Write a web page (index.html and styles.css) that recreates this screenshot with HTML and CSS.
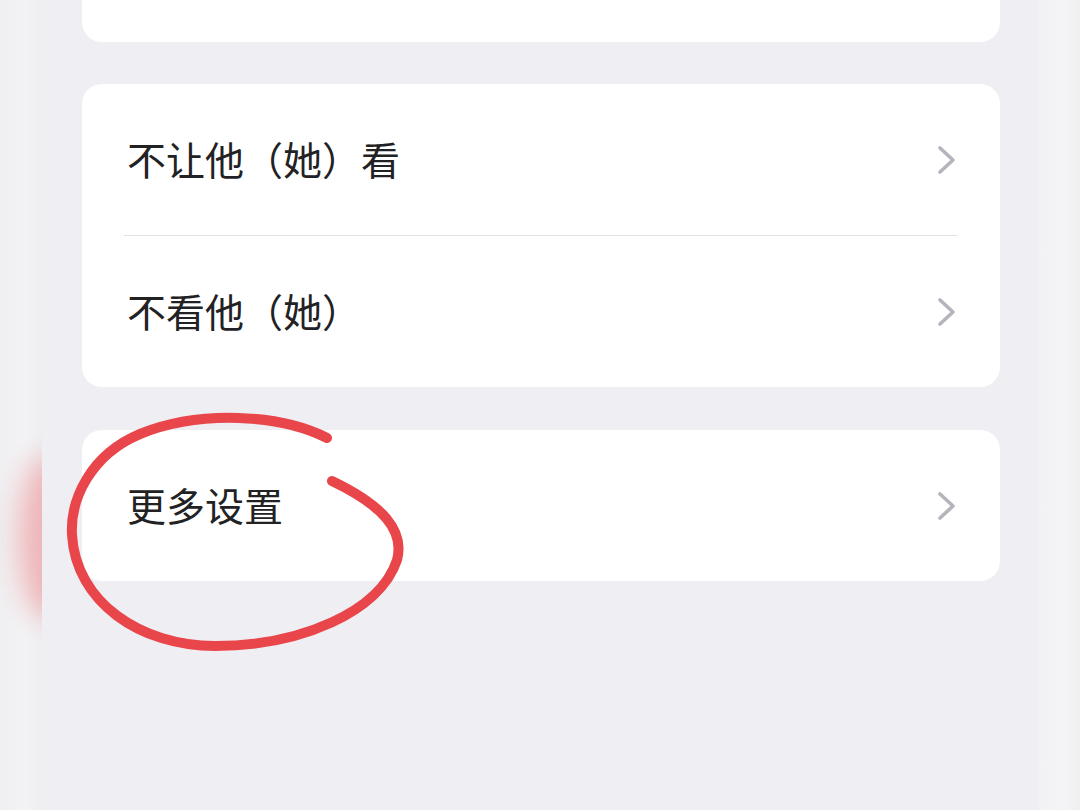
FILE: index.html
```html
<!DOCTYPE html>
<html lang="zh-CN">
<head>
    <meta charset="UTF-8">
    <title>朋友权限</title>
    <link rel="stylesheet" href="styles.css">
</head>
<body>
    <div id="wrap">
        <div class="side side-left"><span class="blob"></span></div>
        <div id="app">
            <div class="card card-top"></div>
            <div class="card">
                <div class="row">
                    <span class="label">不让他（她）看</span>
                    <svg class="arrow" viewBox="0 0 20 30"><polyline points="3,3 16,15 3,27"/></svg>
                </div>
                <div class="line"></div>
                <div class="row">
                    <span class="label">不看他（她）</span>
                    <svg class="arrow" viewBox="0 0 20 30"><polyline points="3,3 16,15 3,27"/></svg>
                </div>
            </div>
            <div class="card card-more">
                <div class="row">
                    <span class="label">更多设置</span>
                    <svg class="arrow" viewBox="0 0 20 30"><polyline points="3,3 16,15 3,27"/></svg>
                </div>
            </div>
        </div>
        <div class="side side-right"></div>
        <!-- 手画的圈 -->
        <svg class="mark" viewBox="0 0 1080 810">
            <path d="M327 438 C280 414, 200 410, 140 434 C90 455, 70 500, 72 535 C76 602, 140 646, 215 646 C300 646, 380 612, 397 560 C405 530, 382 505, 332 481"/>
        </svg>
    </div>
</body>
</html>
```

FILE: styles.css
```css
*{
    margin: 0;
    padding: 0;
    box-sizing: border-box;
}
body{
    background: #efeff3;
    font-family: "Noto Sans CJK SC", "Noto Sans", sans-serif;
}
#wrap{
    position: relative;
    display: flex;
    width: 1080px;
    height: 810px;
    overflow: hidden;
}
.side{
    position: relative;
    width: 42px;
    overflow: hidden;
}
.side-left{
    background: linear-gradient(to right, #f0f0f2 0, #f3f3f5 60%, #efeff2 100%);
}
.side-right{
    background: linear-gradient(to right, #f2f2f4, #f4f4f6 60%, #f0f0f2);
}
.blob{
    position: absolute;
    left: 18px;
    top: 455px;
    width: 60px;
    height: 165px;
    border-radius: 50%;
    background: rgba(236, 110, 112, .45);
    filter: blur(14px);
}
#app{
    flex: 1;
    display: flex;
    flex-direction: column;
    gap: 42px;
    padding: 0 38px 0 40px;
    background: #efeff3;
}
.card{
    background: #fff;
    border-radius: 20px;
}
.card-top{
    height: 42px;
    border-radius: 0 0 20px 20px;
}
.card-more{
    margin-top: 1px;
}
.row{
    display: flex;
    align-items: center;
    justify-content: space-between;
    height: 151px;
    padding: 0 43px 4px 45px;
}
.label{
    font-size: 39px;
    color: #222224;
}
.arrow{
    width: 20px;
    height: 30px;
    margin-top: 4px;
    fill: none;
    stroke: #b4b4bc;
    stroke-width: 3.6;
    stroke-linecap: round;
    stroke-linejoin: round;
}
.line{
    height: 1px;
    margin: 0 42px;
    background: #e2e2e6;
}
.mark{
    position: absolute;
    left: 0;
    top: 0;
    width: 1080px;
    height: 810px;
    fill: none;
    stroke: #e8464a;
    stroke-width: 10;
    stroke-linecap: round;
}
```
